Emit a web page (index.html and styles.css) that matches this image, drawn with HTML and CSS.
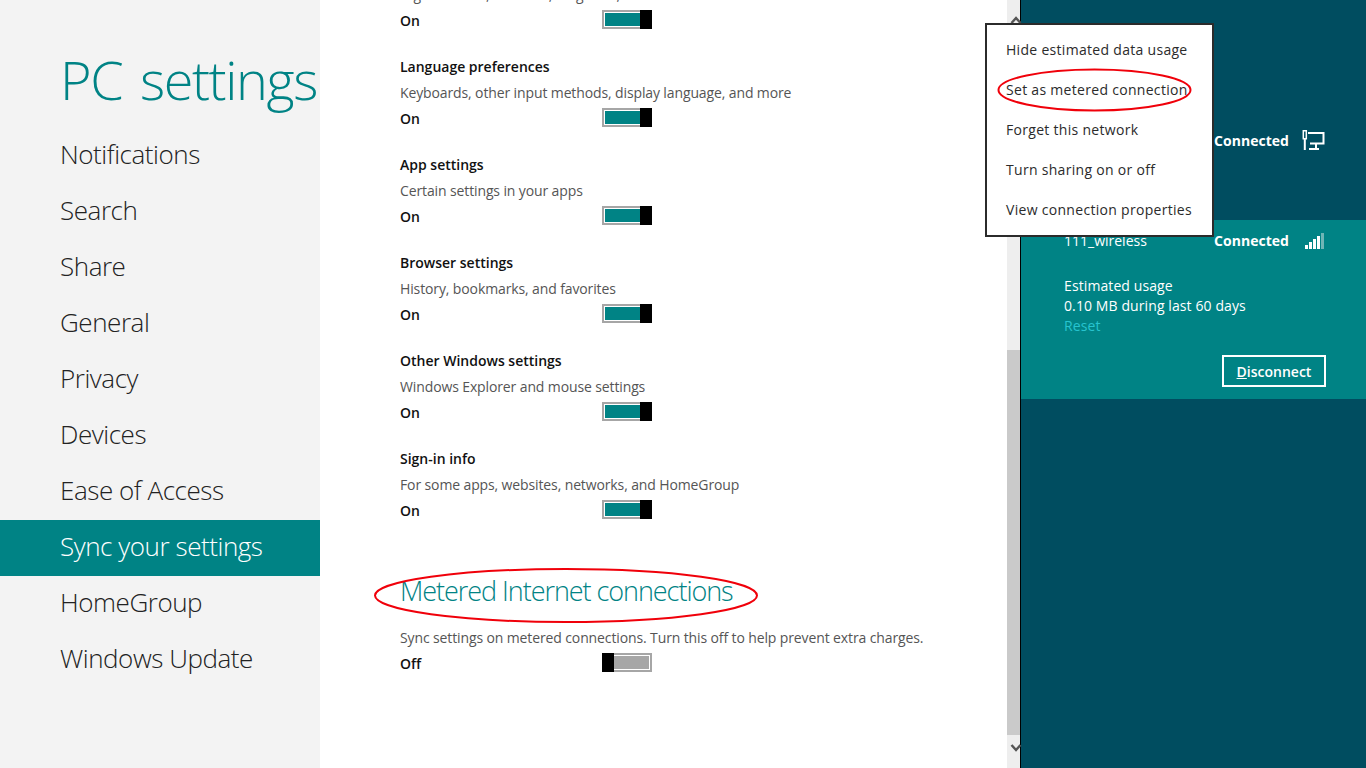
FILE: index.html
```html
<!DOCTYPE html>
<html lang="en">
<head>
    <meta charset="UTF-8">
    <meta name="viewport" content="width=device-width, initial-scale=1.0">
    <title>PC settings</title>
    <link rel="stylesheet" href="styles.css">
</head>
<body>

<aside class="sidebar">
    <h1>PC settings</h1>
    <nav>
        <a href="#">Notifications</a>
        <a href="#">Search</a>
        <a href="#">Share</a>
        <a href="#">General</a>
        <a href="#">Privacy</a>
        <a href="#">Devices</a>
        <a href="#">Ease of Access</a>
        <a href="#" class="active">Sync your settings</a>
        <a href="#">HomeGroup</a>
        <a href="#">Windows Update</a>
    </nav>
</aside>

<main class="content">
    <div class="list">
        <section class="setting">
            <h3>Ease of Access</h3>
            <p>High contrast, Narrator, Magnifier, and more</p>
            <div class="state"><span>On</span><span class="toggle on"></span></div>
        </section>
        <section class="setting">
            <h3>Language preferences</h3>
            <p>Keyboards, other input methods, display language, and more</p>
            <div class="state"><span>On</span><span class="toggle on"></span></div>
        </section>
        <section class="setting">
            <h3>App settings</h3>
            <p>Certain settings in your apps</p>
            <div class="state"><span>On</span><span class="toggle on"></span></div>
        </section>
        <section class="setting">
            <h3>Browser settings</h3>
            <p>History, bookmarks, and favorites</p>
            <div class="state"><span>On</span><span class="toggle on"></span></div>
        </section>
        <section class="setting">
            <h3>Other Windows settings</h3>
            <p>Windows Explorer and mouse settings</p>
            <div class="state"><span>On</span><span class="toggle on"></span></div>
        </section>
        <section class="setting">
            <h3>Sign-in info</h3>
            <p>For some apps, websites, networks, and HomeGroup</p>
            <div class="state"><span>On</span><span class="toggle on"></span></div>
        </section>
        <h2>Metered Internet connections</h2>
        <section class="setting">
            <p>Sync settings on metered connections. Turn this off to help prevent extra charges.</p>
            <div class="state"><span>Off</span><span class="toggle off"></span></div>
        </section>
    </div>
</main>

<div class="scrollbar">
    <svg class="arrow arrow-up" width="12" height="10" viewBox="0 0 12 10"><path d="M1.500 8L6 3l4.500 5" fill="none" stroke="#555" stroke-width="2.500"/></svg>
    <div class="thumb"></div>
    <svg class="arrow arrow-down" width="12" height="10" viewBox="0 0 12 10"><path d="M1.500 2L6 7l4.500-5" fill="none" stroke="#555" stroke-width="2.500"/></svg>
</div>

<aside class="charm">
    <div class="network">
        <span class="net-state">Connected</span>
        <svg class="net-icon" width="24" height="20" viewBox="0 0 24 20">
            <path d="M1.300.8h3v8h-3z" fill="none" stroke="#fff" stroke-width="1.500"/>
            <path d="M2.800 9v11M6 3h15.500v10.500H8M14 14v5M7 19h10" fill="none" stroke="#fff" stroke-width="2"/>
        </svg>
    </div>
    <div class="network active">
        <div class="net-row">
            <span class="net-name">111_wireless</span>
            <span class="net-state">Connected</span>
            <svg class="net-icon" width="24" height="20" viewBox="0 0 24 20">
                <rect x="3" y="15" width="3" height="4" fill="#fff"/>
                <rect x="7" y="12" width="3" height="7" fill="#fff"/>
                <rect x="11" y="9" width="3" height="10" fill="#fff"/>
                <rect x="15" y="6" width="3" height="13" fill="#fff"/>
                <rect x="19" y="3" width="3" height="16" fill="#6fb5b5"/>
            </svg>
        </div>
        <div class="usage">
            <div>Estimated usage</div>
            <div>0.10 MB during last 60 days</div>
            <a href="#">Reset</a>
        </div>
        <div class="actions"><button type="button"><u>D</u>isconnect</button></div>
    </div>
</aside>

<!-- context menu and the red marks lie over the page -->
<ul class="menu">
    <li>Hide estimated data usage</li>
    <li>Set as metered connection</li>
    <li>Forget this network</li>
    <li>Turn sharing on or off</li>
    <li>View connection properties</li>
</ul>

<svg class="mark mark-menu" width="200" height="50" viewBox="0 0 200 50"><ellipse cx="97.500" cy="22" rx="96" ry="20.500"/></svg>
<svg class="mark mark-title" width="390" height="60" viewBox="0 0 390 60"><ellipse cx="194" cy="29.500" rx="191" ry="26.500"/></svg>

</body>
</html>
```

FILE: styles.css
```css
/* Reset */
* {
    margin: 0;
    padding: 0;
    box-sizing: border-box;
}

body {
    display: flex;
    width: 1366px;
    height: 768px;
    overflow: hidden;
    font-family: "Open Sans", "Noto Sans", sans-serif;
    background: #fff;
    color: #222;
}

/* Left column */
.sidebar {
    width: 320px;
    flex: none;
    background: #f3f3f3;
}

.sidebar h1 {
    padding: 42px 0 0 60px;
    height: 128px;
    font-size: 54px;
    line-height: 74px;
    font-weight: 300;
    color: #008385;
    white-space: nowrap;
    letter-spacing: -1.4px;
    word-spacing: 5px;
}

.sidebar a {
    display: block;
    height: 56px;
    padding-left: 60px;
    font-size: 26px;
    line-height: 52px;
    font-weight: 300;
    letter-spacing: -0.45px;
    color: #222;
    text-decoration: none;
}

.sidebar a.active {
    background: #008385;
    color: #fff;
}

/* Settings list */
.content {
    flex: 1;
    overflow: hidden;
}

.list {
    margin-top: -45px;
    padding-left: 80px;
}

.setting {
    height: 98px;
}

.setting h3 {
    font-size: 14px;
    line-height: 20px;
    font-weight: 600;
    color: #111;
    padding-top: 4px;
    height: 27px;
}

.setting p {
    font-size: 14px;
    line-height: 26px;
    letter-spacing: -0.12px;
    color: #555;
}

.state {
    display: flex;
    align-items: flex-start;
    height: 24px;
    font-size: 14px;
    line-height: 26px;
    font-weight: 600;
    color: #111;
}

.state span:first-child {
    width: 202px;
}

.toggle {
    display: flex;
    position: relative;
    width: 50px;
    height: 19px;
    margin-top: 2px;
    border: 2px solid #a6a6a6;
}

.toggle::before {
    content: "";
    flex: 1;
    border: 1px solid #fff;
}

.toggle.on::before {
    background: #008385;
}

.toggle.off::before {
    background: #a6a6a6;
}

.toggle::after {
    content: "";
    position: absolute;
    top: -2px;
    width: 12px;
    height: 19px;
    background: #000;
}

.toggle.on::after {
    right: -2px;
}

.toggle.off::after {
    left: -2px;
}

h2 {
    margin: 31px 0 17px;
    height: 34px;
    font-size: 27px;
    line-height: 34px;
    font-weight: 300;
    letter-spacing: -1.05px;
    color: #008385;
}

/* Scrollbar */
.scrollbar {
    width: 13px;
    flex: none;
    position: relative;
    background: #eee;
}

.thumb {
    position: absolute;
    top: 350px;
    left: 0;
    width: 13px;
    height: 385px;
    background: #cacaca;
}

.arrow {
    position: absolute;
    left: 3px;
}

.arrow-up {
    top: 15px;
}

.arrow-down {
    top: 743px;
}

/* Networks panel */
.charm {
    width: 346px;
    flex: none;
    border-left: 1px solid #000;
    background: #004d60;
    color: #fff;
}

.network {
    height: 220px;
    display: flex;
    align-items: flex-start;
    justify-content: flex-end;
    padding: 130px 40px 0 0;
}

.network.active {
    display: block;
    height: 179px;
    padding: 10px 40px 0 43px;
    background: #008385;
}

.net-row {
    display: flex;
    align-items: flex-start;
}

.net-name {
    flex: 1;
    font-size: 14px;
    line-height: 22px;
}

.net-state {
    font-size: 14px;
    line-height: 22px;
    font-weight: 700;
    letter-spacing: 0.03px;
}

.net-icon {
    margin-left: 13px;
}

.usage {
    margin-top: 24px;
    font-size: 14px;
    line-height: 20px;
    letter-spacing: 0.1px;
}

.usage a {
    color: #27c4cf;
    text-decoration: none;
}

.actions {
    display: flex;
    justify-content: flex-end;
    margin-top: 19px;
}

.actions button {
    width: 104px;
    height: 32px;
    border: 2px solid #fff;
    background: none;
    color: #fff;
    font-family: inherit;
    font-size: 14px;
    font-weight: 600;
}

/* Context menu */
.menu {
    position: absolute;
    top: 23px;
    left: 985px;
    width: 229px;
    height: 214px;
    padding: 7px 0 0 19px;
    list-style: none;
    background: #fff;
    border: 2px solid #2b2b2b;
    font-size: 14px;
    font-weight: 500;
    letter-spacing: 0.3px;
    color: #2b2b2b;
}

.menu li {
    height: 40px;
    line-height: 36px;
}

/* Red marks */
.mark {
    position: absolute;
    fill: none;
    stroke: #f0000a;
    stroke-width: 2;
}

.mark-menu {
    top: 68px;
    left: 997px;
}

.mark-title {
    top: 566px;
    left: 372px;
}
```
